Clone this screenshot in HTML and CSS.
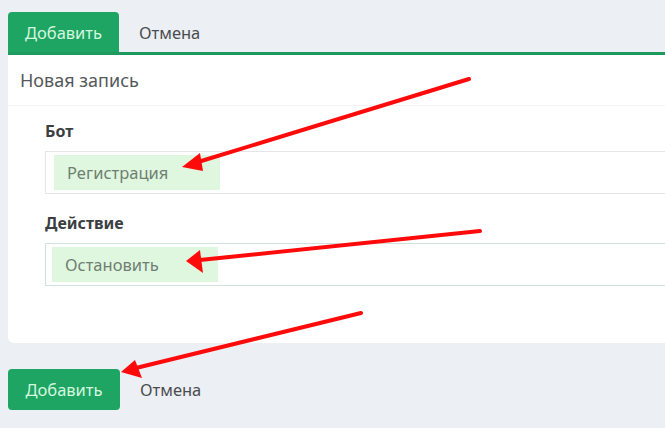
FILE: index.html
```html
<!DOCTYPE html>
<html lang="ru">
<head>
  <meta charset="UTF-8">
  <meta name="viewport" content="width=device-width, initial-scale=1.0">
  <title>Новая запись</title>
  <link rel="stylesheet" href="styles.css">
</head>
<body>
  <div class="page">
    <div class="tabs">
      <button class="btn-green tab-active">Добавить</button>
      <button class="btn-link">Отмена</button>
    </div>

    <div class="card">
      <div class="card-head">Новая запись</div>
      <div class="card-body">
        <div class="field">
          <label>Бот</label>
          <div class="input"><span class="mark">Регистрация</span></div>
        </div>
        <div class="field">
          <label>Действие</label>
          <div class="input input-focus"><span class="mark">Остановить</span></div>
        </div>
      </div>
    </div>

    <div class="actions">
      <button class="btn-green">Добавить</button>
      <button class="btn-link">Отмена</button>
    </div>
  </div>

  <svg class="arrows" width="665" height="428" viewBox="0 0 665 428">
    <g stroke="#ff0a0a" stroke-width="4" stroke-linecap="round">
      <line x1="469" y1="79" x2="198" y2="162" />
      <line x1="480" y1="231" x2="200" y2="260" />
      <line x1="361" y1="313" x2="136" y2="368" />
    </g>
    <g fill="#ff0a0a">
      <polygon points="182,167 200,153 203,171" />
      <polygon points="186,261 200,250 203,273" />
      <polygon points="121,372 135,360 142,378" />
    </g>
  </svg>
</body>
</html>
```

FILE: styles.css
```css
* {
  margin: 0;
  padding: 0;
  box-sizing: border-box;
  font-family: 'Noto Sans', sans-serif;
}

body {
  background: #eceff3;
  width: 665px;
  height: 428px;
  overflow: hidden;
  position: relative;
}

.page {
  padding: 12px 0 0 8px;
}

button {
  border: none;
  background: none;
  font-size: 16.5px;
  cursor: pointer;
}

.btn-green {
  background-color: #1ea463;
  color: #d3f7df;
  height: 41px;
  width: 112px;
  border-radius: 4px;
}

.btn-link {
  color: #4a4d50;
  padding: 0 20px;
}

.tabs {
  display: flex;
  align-items: center;
  border-bottom: 3px solid #1f9a5e;
}

.tab-active {
  height: 40px;
  width: 111px;
  border-radius: 4px 4px 0 0;
}

.card {
  background: #fff;
  height: 288px;
  border-radius: 0 0 0 6px;
}

.card-head {
  height: 51px;
  padding: 0 12px;
  display: flex;
  align-items: center;
  font-size: 18px;
  color: #55585b;
  border-bottom: 1px solid #f3f4f5;
}

.card-body {
  padding: 14px 0 0 37px;
  display: flex;
  flex-direction: column;
  gap: 18px;
}

.field label {
  display: block;
  font-size: 16px;
  font-weight: bold;
  color: #3c3f42;
  margin-bottom: 9px;
}

.input {
  height: 43px;
  border: 1px solid #e3e6e8;
  border-right: none;
  padding: 3px 8px;
  display: flex;
}

.input-focus {
  border-color: #cfe2de;
  padding: 3px 6px;
}

.mark {
  background: #dff7df;
  color: #6f7f72;
  font-size: 16.5px;
  padding: 0 13px;
  width: 166px;
  display: flex;
  align-items: center;
}

.actions {
  display: flex;
  align-items: center;
  margin-top: 26px;
}

.arrows {
  position: absolute;
  top: 0;
  left: 0;
}
```
